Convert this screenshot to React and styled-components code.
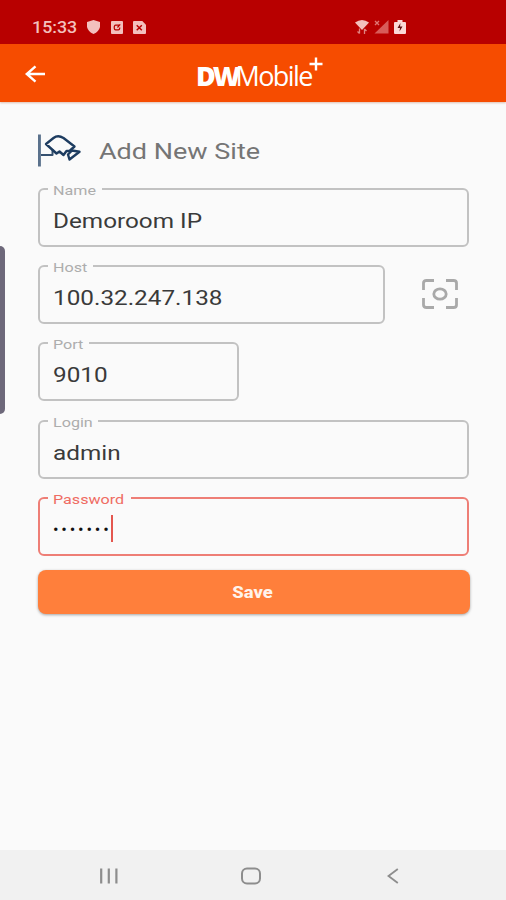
import styled, { createGlobalStyle } from 'styled-components'

const GlobalStyle = createGlobalStyle`
  * {
    box-sizing: border-box;
  }

  body {
    margin: 0;
    background: #fafafa;
    font-family: Roboto, 'Liberation Sans', sans-serif;
  }
`

const Screen = styled.div`
  position: relative;
  display: flex;
  flex-direction: column;
  width: 506px;
  height: 900px;
  overflow: hidden;
  background: #fafafa;
`

const StatusBar = styled.div`
  display: flex;
  align-items: center;
  justify-content: space-between;
  flex: none;
  height: 44px;
  padding: 10px 100px 0 32px;
  background: #b80000;
  color: #f3c0bd;
`

const StatusGroup = styled.div`
  display: flex;
  align-items: center;
  gap: ${props => props.$gap}px;

  svg {
    display: block;
  }
`

// The device renders type wider than its natural width
const Wide = styled.span`
  display: inline-block;
  transform: scaleX(${props => props.$ratio});
  transform-origin: ${props => props.$origin || 'left'} center;
  white-space: pre;
`

const Clock = styled.div`
  width: 45px;
  padding-top: 1px;
  font-size: 16.5px;
  line-height: 20px;
  font-weight: 500;
`

const AppBar = styled.header`
  display: grid;
  grid-template-columns: 1fr 130px 1fr;
  align-items: center;
  flex: none;
  height: 58px;
  padding: 2px 24px 0;
  background: #f64c00;
  box-shadow: 0 1px 2px rgba(160, 50, 0, 0.3);

  svg {
    display: block;
  }
`

const BackButton = styled.button`
  width: 24px;
  padding: 0;
  border: none;
  background: none;
  cursor: pointer;
`

const Brand = styled.div`
  display: flex;
  align-items: flex-start;
  height: 34px;
  padding: 2px 0 0 8px;
  font-family: 'Open Sans', sans-serif;
  font-size: 27px;
  line-height: 34px;
  color: #fff;
`

const BrandBold = styled.span`
  width: 39.5px;
  font-weight: 800;
  letter-spacing: -3px;
  white-space: nowrap;
`

const BrandLight = styled.span`
  width: 75px;
  letter-spacing: -1.6px;
  white-space: nowrap;
`

const BrandPlus = styled.svg`
  flex: none;
  margin-top: -2px;
  margin-left: -2px;
`

const Form = styled.form`
  display: flex;
  flex-direction: column;
  flex: 1;
  padding: 31px 36px 0 38px;
`

const Title = styled.h1`
  display: flex;
  align-items: center;
  gap: 17px;
  height: 36px;
  margin: 0 0 19px;
  font-size: 22.5px;
  font-weight: 400;
  color: #757575;
`

const Row = styled.div`
  display: flex;
  align-items: center;
  gap: 37px;
  margin-bottom: ${props => props.$space ?? 18}px;
`

const Field = styled.label`
  position: relative;
  display: flex;
  align-items: center;
  width: ${props => props.$width || 431}px;
  height: 59px;
  padding: 6px 13px 0;
  border: 2px solid ${props => props.$active ? '#ee7e76' : '#c2c2c2'};
  border-radius: 6px;
  font-size: 20px;
  color: #3a3a3a;
`

const FieldLabel = styled.span`
  position: absolute;
  top: -8px;
  left: 8px;
  width: ${props => props.$width}px;
  height: 16px;
  padding-left: 5px;
  background: #fafafa;
  font-size: 13px;
  line-height: 17px;
  color: ${props => props.$active ? '#ef6c63' : '#adadad'};
`

const Password = styled.span`
  display: flex;
  align-items: center;
`

const Dots = styled.span`
  width: 58px;
  font-size: 16.5px;
  line-height: 28px;
  letter-spacing: 2.8px;
  white-space: nowrap;
  color: #111;
`

const Caret = styled.span`
  width: 2px;
  height: 27px;
  margin-top: -2px;
  background: #e4574f;
`

const ScanButton = styled.button`
  padding: 0;
  margin-top: -2px;
  border: none;
  background: none;
  cursor: pointer;

  svg {
    display: block;
  }
`

const SaveButton = styled.button`
  width: 432px;
  height: 44px;
  margin-top: 14px;
  padding: 1px 2px 0 0;
  border: none;
  border-radius: 8px;
  background: #ff7f3b;
  box-shadow: 0 1px 3px rgba(0, 0, 0, 0.35);
  font-family: inherit;
  font-size: 16px;
  font-weight: 800;
  color: #fff3ec;
  cursor: pointer;
`

const EdgeHandle = styled.div`
  position: absolute;
  top: 246px;
  left: -6px;
  width: 11px;
  height: 168px;
  border-radius: 5px;
  background: #6d687a;
`

const NavBar = styled.nav`
  display: grid;
  grid-template-columns: repeat(3, 142px);
  justify-content: center;
  justify-items: center;
  align-items: center;
  flex: none;
  height: 50px;
  padding: 2px 4px 0 0;
  background: #f1f1f1;
  color: #8d8d8d;
`

function Logo() {
  return (
    <Brand>
      <BrandBold>DW</BrandBold>
      <BrandLight>Mobile</BrandLight>
      <BrandPlus width="14" height="14" viewBox="0 0 14 14" stroke="#fff" strokeWidth="2.4">
        <path d="M7 0.5V13.5M0.5 7H13.5" />
      </BrandPlus>
    </Brand>
  )
}

function CameraIcon() {
  return (
    <svg width="44" height="36" viewBox="0 0 44 36" fill="none" stroke="#1d3c60" strokeWidth="2.4" strokeLinejoin="round">
      <path d="M1.3 1.5V33.5" stroke="#5a718c" strokeWidth="3.2" />
      <path d="M3 22H14.5V16" stroke="#35506f" strokeWidth="2" />
      <path d="M8 11L15.5 5Q20 1.5 25.5 5L36.5 13.5L31.5 18L28.5 18L25.5 22L21.5 18.5L18.5 20.5Z" />
      <path d="M30 21.5L34 17.5L41.5 18.8L31.5 26.5Z" />
    </svg>
  )
}

function TextField({ label, labelWidth, value, width, active, children }) {
  return (
    <Field $width={width} $active={active}>
      <FieldLabel $width={labelWidth} $active={active}>
        <Wide $ratio={1.24}>{label}</Wide>
      </FieldLabel>
      {children || <Wide $ratio={1.215}>{value}</Wide>}
    </Field>
  )
}

export default function App() {
  return (
    <>
      <GlobalStyle />
      <Screen>
        <StatusBar>
          <StatusGroup $gap={10.4}>
            <Clock><Wide $ratio={1.08}>15:33</Wide></Clock>
            <svg width="13" height="14" viewBox="0 0 13 14">
              <path d="M6.5 0L13 2V7Q12 11.5 6.5 14Q1 11.5 0 7V2Z" fill="currentColor" />
            </svg>
            <svg width="12" height="13" viewBox="0 0 13 14">
              <rect width="13" height="14" rx="1" fill="currentColor" />
              <path d="M9 4.5H5Q3.5 4.5 3.5 7T5 9.5H8Q9.5 9.5 9.5 7M7 7L10 3.5" stroke="#b80000" strokeWidth="1.3" fill="none" />
            </svg>
            <svg width="13" height="13" viewBox="0 0 14 14">
              <path d="M1 0H10L14 4V13Q14 14 13 14H1Q0 14 0 13V1Q0 0 1 0Z" fill="currentColor" />
              <path d="M4 4.5L9.5 10M9.5 4.5L4 10" stroke="#b80000" strokeWidth="1.6" />
            </svg>
          </StatusGroup>
          <StatusGroup $gap={5}>
            <svg width="14" height="16" viewBox="0 0 14 16">
              <path d="M0 3.5Q7-1.5 14 3.5L7 11Z" fill="currentColor" />
              <path d="M4.5 9.5V14.5M2.5 12.5L4.5 14.5M9.5 15V10M11.5 12L9.5 10" stroke="#df8380" strokeWidth="1.3" fill="none" />
            </svg>
            <svg width="15" height="14" viewBox="0 0 15 14">
              <path d="M14.5 0V13.5H0.5Z" fill="#d85c59" />
              <path d="M1 1L5 5M5 1L1 5" stroke="#df7774" strokeWidth="1.3" />
            </svg>
            <svg width="12" height="14" viewBox="0 0 12 14">
              <path d="M1 2H3.5V0H8.5V2H11Q12 2 12 3V13Q12 14 11 14H1Q0 14 0 13V3Q0 2 1 2Z" fill="#fbd9d7" />
              <path d="M6.5 3L3.5 8H6L5.5 11.5L8.5 6.5H6Z" fill="#5c1010" />
            </svg>
          </StatusGroup>
        </StatusBar>

        <AppBar>
          <BackButton type="button" aria-label="Back">
            <svg width="22" height="18" viewBox="0 0 22 18" fill="none" stroke="#fff" strokeWidth="2.4">
              <path d="M21 9H3M11.5 1.3L2.8 9L11.5 16.7" />
            </svg>
          </BackButton>
          <Logo />
        </AppBar>

        <Form>
          <Title>
            <CameraIcon />
            <Wide $ratio={1.2}>Add New Site</Wide>
          </Title>

          <Row>
            <TextField label="Name" labelWidth={54} value="Demoroom IP" />
          </Row>
          <Row>
            <TextField label="Host" labelWidth={45} value="100.32.247.138" width={347} />
            <ScanButton type="button" aria-label="Scan code">
              <svg width="36" height="30" viewBox="0 0 36 30" fill="none" stroke="#a9a9a9" strokeWidth="2.8">
                <path d="M1.5 11V4Q1.5 1.5 4.5 1.5H12M24 1.5H31.5Q34.5 1.5 34.5 4V11M34.5 19V26Q34.5 28.5 31.5 28.5H24M12 28.5H4.5Q1.5 28.5 1.5 26V19" />
                <ellipse cx="18" cy="15" rx="6.2" ry="5.2" />
              </svg>
            </ScanButton>
          </Row>
          <Row $space={19}>
            <TextField label="Port" labelWidth={41} value="9010" width={201} />
          </Row>
          <Row>
            <TextField label="Login" labelWidth={50} value="admin" />
          </Row>
          <Row $space={0}>
            <TextField label="Password" labelWidth={83} active>
              <Password>
                <Dots>•••••••</Dots>
                <Caret />
              </Password>
            </TextField>
          </Row>

          <SaveButton type="button">
            <Wide $ratio={1.15} $origin="center">Save</Wide>
          </SaveButton>
        </Form>

        <EdgeHandle />

        <NavBar>
          <svg width="20" height="16" viewBox="0 0 20 16" stroke="currentColor" strokeWidth="2.2">
            <path d="M2.2 0.5V15.5M9.8 0.5V15.5M17.4 0.5V15.5" />
          </svg>
          <svg width="20" height="18" viewBox="0 0 20 18" fill="none" stroke="currentColor" strokeWidth="2">
            <rect x="1" y="1.5" width="18" height="15" rx="5" />
          </svg>
          <svg width="12" height="16" viewBox="0 0 12 16" fill="none" stroke="currentColor" strokeWidth="1.8">
            <path d="M10.8 1L1.5 8L10.8 15" />
          </svg>
        </NavBar>
      </Screen>
    </>
  )
}
